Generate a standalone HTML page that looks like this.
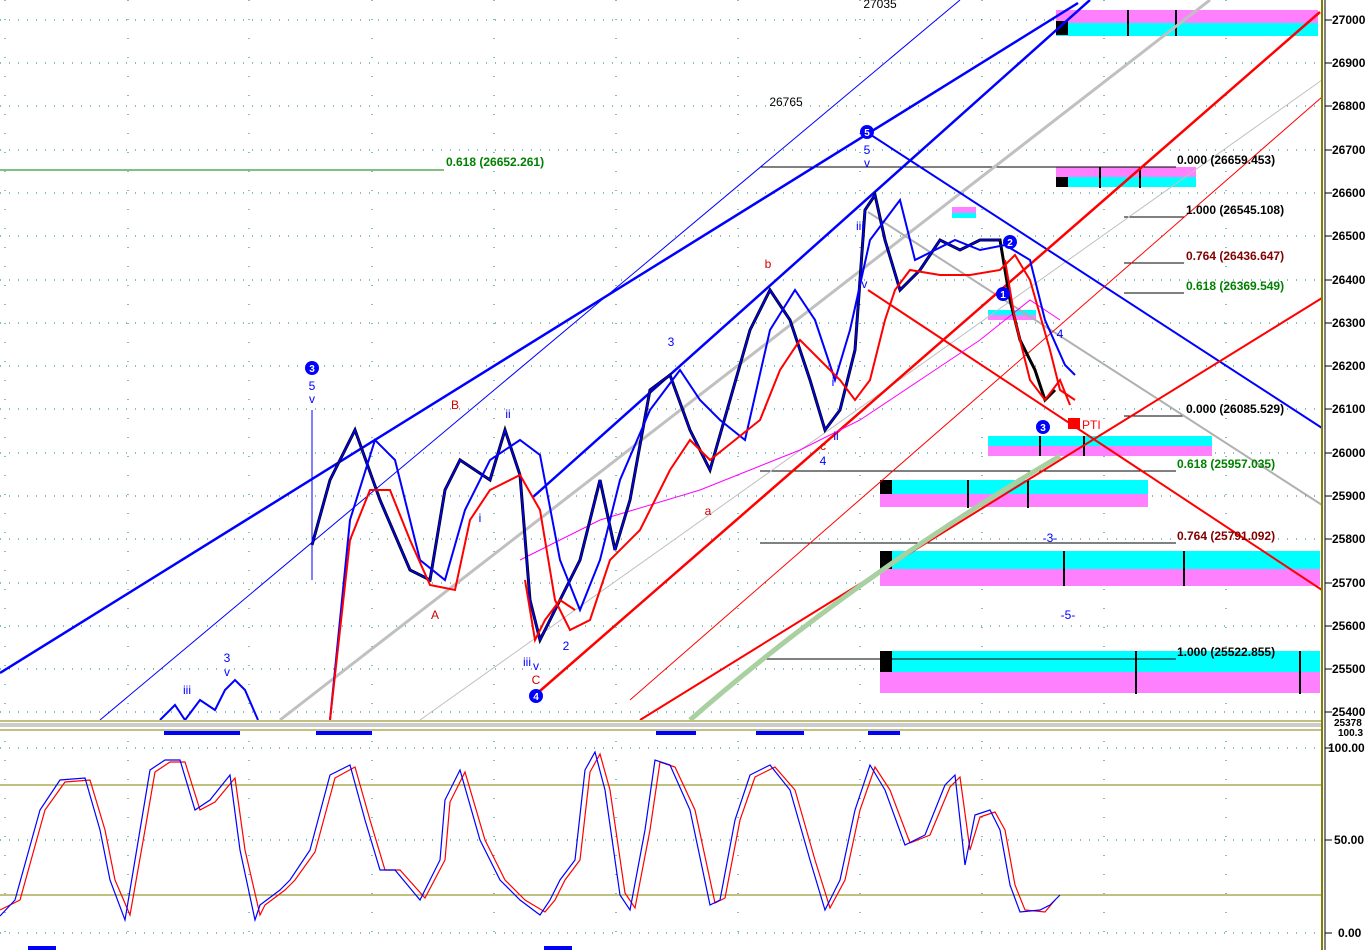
<!DOCTYPE html>
<html><head><meta charset="utf-8"><style>
html,body{margin:0;padding:0;background:#fff;width:1366px;height:950px;overflow:hidden}
svg{display:block;font-family:"Liberation Sans",sans-serif}
</style></head><body>
<svg width="1366" height="950" viewBox="0 0 1366 950" xmlns="http://www.w3.org/2000/svg">
<rect width="1366" height="950" fill="#fff"/>
<g stroke="#008080" stroke-width="1" stroke-dasharray="1,8">
<line x1="0" y1="20" x2="1322" y2="20"/><line x1="0" y1="63" x2="1322" y2="63"/><line x1="0" y1="106" x2="1322" y2="106"/><line x1="0" y1="150" x2="1322" y2="150"/><line x1="0" y1="193" x2="1322" y2="193"/><line x1="0" y1="236" x2="1322" y2="236"/><line x1="0" y1="280" x2="1322" y2="280"/><line x1="0" y1="323" x2="1322" y2="323"/><line x1="0" y1="366" x2="1322" y2="366"/><line x1="0" y1="409" x2="1322" y2="409"/><line x1="0" y1="453" x2="1322" y2="453"/><line x1="0" y1="496" x2="1322" y2="496"/><line x1="0" y1="539" x2="1322" y2="539"/><line x1="0" y1="583" x2="1322" y2="583"/><line x1="0" y1="626" x2="1322" y2="626"/><line x1="0" y1="669" x2="1322" y2="669"/><line x1="0" y1="712" x2="1322" y2="712"/>
<line x1="0" y1="748" x2="1322" y2="748"/><line x1="0" y1="840" x2="1322" y2="840"/><line x1="0" y1="933" x2="1322" y2="933"/>
</g>
<g stroke="#008080" stroke-width="1" stroke-dasharray="1,18">
<line x1="5" y1="0" x2="5" y2="950"/><line x1="128" y1="0" x2="128" y2="950"/><line x1="249" y1="0" x2="249" y2="950"/><line x1="372" y1="0" x2="372" y2="950"/><line x1="494" y1="0" x2="494" y2="950"/><line x1="616" y1="0" x2="616" y2="950"/><line x1="738" y1="0" x2="738" y2="950"/><line x1="860" y1="0" x2="860" y2="950"/><line x1="982" y1="0" x2="982" y2="950"/><line x1="1104" y1="0" x2="1104" y2="950"/><line x1="1226" y1="0" x2="1226" y2="950"/>
</g>
<rect x="1056" y="10" width="262" height="13" fill="#ff80ff"/><rect x="1056" y="23" width="262" height="13" fill="#00ffff"/><rect x="1056" y="21" width="12" height="14" fill="#000"/>
<rect x="1056" y="167" width="140" height="10" fill="#ff80ff"/><rect x="1056" y="177" width="140" height="10" fill="#00ffff"/><rect x="1056" y="177" width="12" height="10" fill="#000"/>
<rect x="952" y="207" width="24" height="6" fill="#ff80ff"/><rect x="952" y="213" width="24" height="5" fill="#00ffff"/>
<rect x="988" y="310" width="48" height="5" fill="#00ffff"/><rect x="988" y="315" width="48" height="5" fill="#ff80ff"/>
<rect x="988" y="436" width="224" height="10" fill="#00ffff"/><rect x="988" y="446" width="224" height="10" fill="#ff80ff"/>
<rect x="880" y="480" width="268" height="14" fill="#00ffff"/><rect x="880" y="494" width="268" height="13" fill="#ff80ff"/><rect x="880" y="480" width="12" height="14" fill="#000"/>
<rect x="880" y="551" width="440" height="18" fill="#00ffff"/><rect x="880" y="569" width="440" height="17" fill="#ff80ff"/><rect x="880" y="551" width="12" height="18" fill="#000"/>
<rect x="880" y="651" width="440" height="21" fill="#00ffff"/><rect x="880" y="672" width="440" height="21" fill="#ff80ff"/><rect x="880" y="651" width="12" height="21" fill="#000"/>
<g stroke="#000" stroke-width="2">
<line x1="1128" y1="10" x2="1128" y2="36"/><line x1="1176" y1="10" x2="1176" y2="36"/><line x1="1100" y1="167" x2="1100" y2="188"/><line x1="1140" y1="167" x2="1140" y2="188"/><line x1="1040" y1="436" x2="1040" y2="456"/><line x1="1084" y1="436" x2="1084" y2="456"/><line x1="968" y1="480" x2="968" y2="508"/><line x1="1028" y1="480" x2="1028" y2="508"/><line x1="1064" y1="551" x2="1064" y2="586"/><line x1="1184" y1="551" x2="1184" y2="586"/><line x1="1136" y1="651" x2="1136" y2="694"/><line x1="1300" y1="651" x2="1300" y2="694"/>
</g>
<g stroke="#000" stroke-width="1">
<line x1="760" y1="167" x2="1176" y2="167"/><line x1="1124" y1="217" x2="1184" y2="217"/><line x1="1124" y1="263" x2="1184" y2="263"/><line x1="1124" y1="293" x2="1184" y2="293"/><line x1="1124" y1="416" x2="1184" y2="416"/><line x1="760" y1="471" x2="1176" y2="471"/><line x1="760" y1="543" x2="1176" y2="543"/><line x1="760" y1="659" x2="1176" y2="659"/>
</g>
<line x1="0" y1="170" x2="444" y2="170" stroke="#008000" stroke-width="1"/>
<g fill="none">
<line x1="280" y1="720" x2="1210" y2="0" stroke="#c0c0c0" stroke-width="3"/>
<line x1="420" y1="720" x2="1322" y2="80" stroke="#c0c0c0" stroke-width="1"/>
<line x1="868" y1="212" x2="1322" y2="505" stroke="#b0b0b0" stroke-width="2"/>
<line x1="0" y1="673" x2="1078" y2="3" stroke="#0000ff" stroke-width="2.5"/>
<line x1="533" y1="497" x2="1090" y2="0" stroke="#0000ff" stroke-width="2.5"/>
<line x1="868" y1="133" x2="1322" y2="428" stroke="#0000ff" stroke-width="2"/>
<line x1="100" y1="720" x2="960" y2="0" stroke="#0000ff" stroke-width="1"/>
<line x1="533" y1="697" x2="1320" y2="12" stroke="#ff0000" stroke-width="2.5"/>
<line x1="640" y1="720" x2="1322" y2="298" stroke="#ff0000" stroke-width="2"/>
<line x1="630" y1="700" x2="1322" y2="97" stroke="#ff0000" stroke-width="1"/>
<line x1="868" y1="290" x2="1322" y2="590" stroke="#ff0000" stroke-width="2"/>
<path d="M690 720 Q850 580 1060 456" stroke="#a8d0a0" stroke-width="5"/>
<polyline stroke="#ff00ff" stroke-width="1" points="520,560 600,520 700,490 800,450 860,420 920,380 980,340 1030,300 1060,320"/>
<polyline stroke="#000" stroke-width="3" points="312,545 330,480 355,430 380,500 410,570 430,580 445,490 460,460 490,480 505,430 520,475 530,600 540,640 560,600 580,560 600,480 615,550 630,500 650,390 670,375 690,430 710,470 730,400 750,330 770,290 790,320 810,380 825,430 840,410 855,350 865,210 875,195 885,240 900,290 920,270 940,240 960,250 980,240 1000,240 1010,300 1020,340 1035,370 1045,400 1055,390"/>
<polyline stroke="#0000ff" stroke-width="1.5" points="312,545 330,480 355,430 380,500 410,570 430,580 445,490 460,460 490,480 505,430 520,475 530,600 540,640 560,600 580,560 600,480 615,550 630,500 650,390 670,375 690,430 710,470 730,400 750,330 770,290 790,320 810,380 825,430 840,410 855,350 865,210 875,195 885,240 900,290 920,270 940,240 960,250 980,240 1000,240"/>
<polyline stroke="#ff0000" stroke-width="2" points="525,580 535,640 545,620 560,600 575,610"/>
<polyline stroke="#0000ff" stroke-width="2" points="330,720 350,520 375,440 395,460 420,560 445,580 465,510 490,460 520,440 540,455 560,560 580,610 600,560 620,480 650,410 680,370 700,400 720,420 745,440 770,330 795,290 815,320 835,380 850,330 870,240 885,220 900,200 915,260 935,250 955,240 980,250 1005,245 1030,260 1045,320 1065,365 1075,375"/>
<polyline stroke="#ff0000" stroke-width="2" points="330,720 350,540 370,490 390,490 410,540 430,585 455,590 470,520 490,490 520,475 540,510 555,600 570,630 590,620 610,560 640,530 670,470 690,440 710,460 735,440 760,420 780,370 800,340 820,360 840,380 855,400 870,380 885,320 895,290 910,270 940,275 970,275 1000,270 1015,255 1030,280 1050,350 1060,390 1075,400"/>
<polyline stroke="#ff0000" stroke-width="2" points="1005,260 1015,320 1030,380 1045,400 1060,380 1070,405"/>
<polyline stroke="#0000ff" stroke-width="2" points="160,720 175,705 185,720 200,700 215,710 225,690 235,680 245,690 258,720"/>
<line x1="312" y1="410" x2="312" y2="580" stroke="#0000ff" stroke-width="1"/>
</g>
<g font-size="12" text-anchor="middle">
<circle cx="312" cy="368" r="7" fill="#0000ff"/><text x="312" y="372" fill="#fff" font-size="10" font-weight="bold">3</text>
<text x="312" y="390" fill="#0000ff">5</text><text x="312" y="403" fill="#0000ff">v</text>
<circle cx="867" cy="132" r="7" fill="#0000ff"/><text x="867" y="136" fill="#fff" font-size="10" font-weight="bold">5</text>
<text x="867" y="154" fill="#0000ff">5</text><text x="867" y="167" fill="#0000ff">v</text>
<circle cx="536" cy="696" r="7" fill="#0000ff"/><text x="536" y="700" fill="#fff" font-size="10" font-weight="bold">4</text>
<circle cx="1043" cy="427" r="7" fill="#0000ff"/><text x="1043" y="431" fill="#fff" font-size="10" font-weight="bold">3</text>
<circle cx="1003" cy="294" r="7" fill="#0000ff"/><text x="1003" y="298" fill="#fff" font-size="10" font-weight="bold">1</text>
<circle cx="1010" cy="242" r="7" fill="#0000ff"/><text x="1010" y="246" fill="#fff" font-size="10" font-weight="bold">2</text>
<text x="455" y="409" fill="#d00000">B</text><text x="435" y="619" fill="#d00000">A</text><text x="536" y="684" fill="#d00000">C</text>
<text x="768" y="268" fill="#d00000">b</text><text x="708" y="515" fill="#d00000">a</text><text x="823" y="450" fill="#d00000">c</text>
<text x="508" y="418" fill="#0000ff">ii</text><text x="480" y="522" fill="#0000ff">i</text><text x="671" y="346" fill="#0000ff">3</text>
<text x="566" y="650" fill="#0000ff">2</text><text x="823" y="465" fill="#0000ff">4</text><text x="527" y="666" fill="#0000ff">iii</text><text x="536" y="670" fill="#0000ff">v</text>
<text x="860" y="230" fill="#0000ff">iii</text><text x="863" y="288" fill="#0000ff">iv</text><text x="833" y="386" fill="#0000ff">i</text><text x="836" y="440" fill="#0000ff">ii</text>
<text x="227" y="662" fill="#0000ff">3</text><text x="227" y="676" fill="#0000ff">v</text><text x="187" y="694" fill="#0000ff">iii</text>
<text x="1050" y="542" fill="#0000ff">-3-</text><text x="1068" y="619" fill="#0000ff">-5-</text><text x="1060" y="338" fill="#0000ff">4</text>
<text x="786" y="106" fill="#000">26765</text><text x="880" y="8" fill="#000">27035</text>
</g>
<rect x="1068" y="418" width="12" height="11" fill="#ff0000"/>
<text x="1082" y="429" font-size="12" fill="#ff0000">PTI</text>
<g font-size="12" font-weight="bold">
<text x="446" y="166" fill="#008000">0.618 (26652.261)</text>
<text x="1177" y="164" fill="#000">0.000 (26659.453)</text>
<text x="1186" y="214" fill="#000">1.000 (26545.108)</text>
<text x="1186" y="260" fill="#800000">0.764 (26436.647)</text>
<text x="1186" y="290" fill="#008000">0.618 (26369.549)</text>
<text x="1186" y="413" fill="#000">0.000 (26085.529)</text>
<text x="1177" y="468" fill="#008000">0.618 (25957.035)</text>
<text x="1177" y="540" fill="#800000">0.764 (25791.092)</text>
<text x="1177" y="656" fill="#000">1.000 (25522.855)</text>
</g>
<rect x="0" y="720" width="1366" height="10" fill="#fff"/>
<line x1="0" y1="721" x2="1322" y2="721" stroke="#808000"/>
<rect x="0" y="723" width="1322" height="4" fill="#ccc"/>
<line x1="0" y1="730" x2="1322" y2="730" stroke="#808000"/>
<g fill="#0000ff">
<rect x="164" y="731" width="76" height="4"/><rect x="316" y="731" width="56" height="4"/><rect x="656" y="731" width="40" height="4"/><rect x="756" y="731" width="48" height="4"/><rect x="868" y="731" width="32" height="4"/>
<rect x="28" y="946" width="28" height="4"/><rect x="544" y="946" width="28" height="4"/>
</g>
<line x1="0" y1="785" x2="1322" y2="785" stroke="#808000"/>
<line x1="0" y1="895" x2="1322" y2="895" stroke="#808000"/>
<polyline fill="none" stroke="#ff0000" stroke-width="1.2" points="0,910 20,900 45,810 65,782 90,780 105,830 115,880 130,915 145,830 155,772 170,762 185,762 200,810 215,802 235,778 245,850 260,915 265,905 285,890 295,880 315,852 335,778 355,767 370,820 385,870 400,870 425,898 445,860 450,802 465,772 485,840 505,880 525,900 545,912 555,900 565,880 580,860 590,772 600,754 610,790 625,893 635,908 650,830 660,762 675,767 695,810 715,903 725,898 740,820 755,777 775,767 795,790 815,860 830,908 845,880 860,810 875,767 890,790 910,843 930,835 950,787 960,777 970,850 980,817 995,812 1005,830 1015,885 1025,910 1045,912 1055,900"/>
<polyline fill="none" stroke="#0000ff" stroke-width="1.2" points="0,916 15,900 40,810 60,780 85,778 100,830 110,880 125,920 140,830 150,770 165,760 180,760 195,810 210,800 230,775 240,850 255,920 260,905 280,890 290,880 310,850 330,775 350,765 365,820 380,870 395,870 420,900 440,860 445,800 460,770 480,840 500,880 520,900 540,915 550,900 560,880 575,860 585,770 595,752 605,790 620,895 630,910 645,830 655,760 670,765 690,810 710,905 720,900 735,820 750,775 770,765 790,790 810,860 825,910 840,880 855,810 870,765 885,790 905,845 925,835 945,785 955,775 965,865 975,815 990,810 1000,830 1010,885 1020,912 1040,910 1050,905 1060,895"/>
<line x1="1322" y1="0" x2="1322" y2="950" stroke="#808000" stroke-width="2"/>
<line x1="1325" y1="0" x2="1325" y2="950" stroke="#000" stroke-width="1"/>
<g stroke="#000"><line x1="1325" y1="20" x2="1332" y2="20"/><line x1="1325" y1="63" x2="1332" y2="63"/><line x1="1325" y1="106" x2="1332" y2="106"/><line x1="1325" y1="150" x2="1332" y2="150"/><line x1="1325" y1="193" x2="1332" y2="193"/><line x1="1325" y1="236" x2="1332" y2="236"/><line x1="1325" y1="280" x2="1332" y2="280"/><line x1="1325" y1="323" x2="1332" y2="323"/><line x1="1325" y1="366" x2="1332" y2="366"/><line x1="1325" y1="409" x2="1332" y2="409"/><line x1="1325" y1="453" x2="1332" y2="453"/><line x1="1325" y1="496" x2="1332" y2="496"/><line x1="1325" y1="539" x2="1332" y2="539"/><line x1="1325" y1="583" x2="1332" y2="583"/><line x1="1325" y1="626" x2="1332" y2="626"/><line x1="1325" y1="669" x2="1332" y2="669"/><line x1="1325" y1="712" x2="1332" y2="712"/><line x1="1325" y1="748" x2="1332" y2="748"/><line x1="1325" y1="840" x2="1332" y2="840"/><line x1="1325" y1="933" x2="1332" y2="933"/></g>
<g font-size="12" font-weight="bold" fill="#000">
<text x="1332" y="24">27000</text><text x="1332" y="67">26900</text><text x="1332" y="110">26800</text><text x="1332" y="154">26700</text><text x="1332" y="197">26600</text><text x="1332" y="240">26500</text><text x="1332" y="284">26400</text><text x="1332" y="327">26300</text><text x="1332" y="370">26200</text><text x="1332" y="413">26100</text><text x="1332" y="457">26000</text><text x="1332" y="500">25900</text><text x="1332" y="543">25800</text><text x="1332" y="587">25700</text><text x="1332" y="630">25600</text><text x="1332" y="673">25500</text><text x="1332" y="716">25400</text>
<text x="1334" y="726" font-size="10">25378</text><text x="1338" y="736" font-size="10">100.3</text>
<text x="1328" y="752">100.00</text><text x="1334" y="844">50.00</text><text x="1338" y="937">0.00</text>
</g>
</svg>
</body></html>
